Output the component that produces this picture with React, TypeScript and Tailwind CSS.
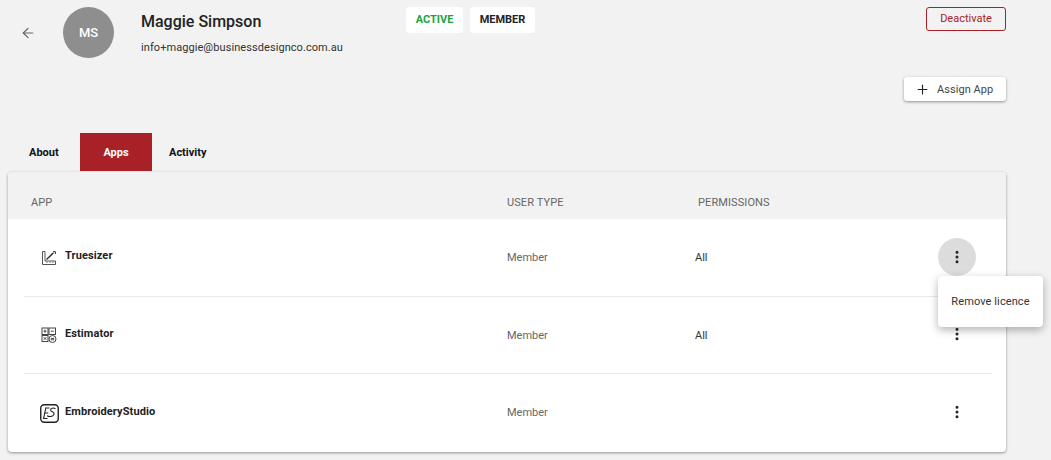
import { ArrowLeft, MoreVertical, Plus } from "lucide-react";
import { FC, ReactNode } from "react";

const TruesizerIcon = () => (
  <svg width="16" height="16" viewBox="0 0 16 16" fill="none" stroke="#555" strokeWidth="1">
    <path d="M1.5 1.5h2.5v9.5h10.5v3.5h-13z" />
    <path d="M5.5 9.5 12.5 2.8" strokeWidth="1.5" stroke="#333" />
    <path d="M12 1.6l2.4 0 0 2.4" stroke="#333" />
    <path d="M6 11.5v1.5M9 11.5v1.5M12 11.5v1.5" strokeWidth="0.8" />
  </svg>
);

const EstimatorIcon = () => (
  <svg width="16" height="16" viewBox="0 0 16 16" fill="none" stroke="#444" strokeWidth="1">
    <rect x="1" y="1" width="6" height="6.5" />
    <rect x="8" y="1" width="6.5" height="6.5" />
    <rect x="1" y="8.5" width="6" height="6" />
    <path d="M2.5 4.2h3M4 2.7v3M9.8 4.2h3M2.7 10.2l2.6 2.6M5.3 10.2l-2.6 2.6" />
    <circle cx="11.5" cy="12" r="3.5" fill="#fff" />
    <path d="M9.8 11.4h3.4M9.8 12.8h3.4" />
  </svg>
);

const StudioIcon = () => (
  <svg width="19" height="19" viewBox="0 0 19 19" fill="none" stroke="#222">
    <rect x="0.75" y="0.75" width="17.5" height="17.5" rx="3.5" strokeWidth="1.4" />
    <path d="M9.5 4H5.8L3.6 14.5H7.5M4.7 9H8.2" strokeWidth="1.1" />
    <path d="M15.5 4.8c-2-1.4-5-.6-4.9 1.2.1 2.1 3.9 1.7 3.5 4-.4 2.4-4.5 3.3-7 1.8" strokeWidth="1.1" />
  </svg>
);

type RowProps = {
  icon: ReactNode;
  name: string;
  permissions?: string;
  active?: boolean;
  last?: boolean;
  className?: string;
};

const Row: FC<RowProps> = ({ icon, name, permissions, active, last, className }) => (
  <div className={`flex items-center ${className}`}>
    <div className="flex w-[483px] items-center pl-[12px]">
      <div className="flex w-[26px] justify-center">{icon}</div>
      <span className="ml-[3px] -translate-y-[1px] text-[11px] font-bold tracking-[0.1px] text-[#222]">{name}</span>
    </div>
    <div className={last ? "w-[188px] text-[11px] text-[#666]" : "w-[188px] translate-y-[1px] text-[11px] text-[#666]"}>Member</div>
    <div className="w-[243px] translate-y-[1px] text-[11px] text-[#333]">{permissions}</div>
    <div className={active ? "flex size-[38px] -translate-y-[1px] items-center justify-center rounded-full bg-[#dcdcdc]" : "flex size-[38px] -translate-y-[1px] items-center justify-center"}>
      <MoreVertical size={16} strokeWidth={2.5} className="text-[#222]" />
    </div>
  </div>
);

export default function App() {
  return (
    <div className="relative h-[460px] w-[1051px] overflow-hidden bg-[#f2f2f2] font-['Roboto',sans-serif]">
      <div className="flex h-[133px] w-[1006px] items-start pt-[7px]">
        <div className="flex h-[51px] w-[63px] items-center pl-[20px]">
          <ArrowLeft size={16} strokeWidth={1.8} className="text-[#666]" />
        </div>
        <div className="flex size-[51px] items-center justify-center rounded-full bg-[#8e8e8e] text-[13px] font-medium text-white">MS</div>
        <div className="ml-[27px] w-[265px]">
          <div className="mt-[5px] text-[16px] leading-[19px] font-medium text-[#222]">Maggie Simpson</div>
          <div className="mt-[10px] text-[11px] leading-[13px] tracking-[0.07px] text-[#333]">info+maggie@businessdesignco.com.au</div>
        </div>
        <div className="flex gap-[7px]">
          <div className="flex h-[26px] w-[57px] items-center justify-center rounded-[3px] bg-white text-[11px] font-bold text-[#22a33f]">ACTIVE</div>
          <div className="flex h-[26px] w-[65px] items-center justify-center rounded-[3px] bg-white text-[11px] font-bold text-[#222]">MEMBER</div>
        </div>
        <div className="ml-auto flex flex-col items-end">
          <div className="flex h-[24px] w-[80px] items-center justify-center rounded-[3px] border border-[#a82126] text-[11px] text-[#a82126]">Deactivate</div>
          <div className="mt-[46px] flex h-[24px] w-[102px] items-center rounded-[3px] bg-white pl-[12px] text-[11px] tracking-[0.05px] text-[#444] shadow-[0_1px_3px_rgba(0,0,0,0.4)]">
            <Plus size={15} strokeWidth={1.8} className="-ml-[1px] text-[#222]" />
            <span className="ml-[7px] translate-y-[1px]">Assign App</span>
          </div>
        </div>
      </div>
      <div className="flex h-[39px] text-[11px] font-bold">
        <div className="flex h-[38px] w-[80px] items-center pt-[2px] pl-[29px] text-[#111]">About</div>
        <div className="flex h-[38px] w-[72px] items-center justify-center bg-[#a82126] pt-[2px] text-white">Apps</div>
        <div className="flex h-[38px] w-[80px] items-center pt-[2px] pl-[17px] text-[#111]">Activity</div>
      </div>
      <div className="ml-[8px] w-[998px] rounded-[4px] bg-white shadow-[0_1px_3px_rgba(0,0,0,0.4)]">
        <div className="flex h-[47px] items-center rounded-t-[4px] bg-[#f2f2f2] pt-[16px] pl-[23px] text-[11px] tracking-[0.1px] text-[#666]">
          <div className="w-[476px]">APP</div>
          <div className="w-[191px]">USER TYPE</div>
          <div>PERMISSIONS</div>
        </div>
        <div className="pr-[14px] pl-[16px]">
          <Row icon={<TruesizerIcon />} name="Truesizer" permissions="All" active className="h-[78px] border-b border-[#e9e9e9]" />
          <Row icon={<EstimatorIcon />} name="Estimator" permissions="All" className="h-[77px] border-b border-[#e9e9e9]" />
          <Row icon={<StudioIcon />} name="EmbroideryStudio" last className="h-[78px]" />
        </div>
      </div>
      <div className="absolute top-[276px] left-[938px] flex h-[51px] w-[105px] items-center justify-center rounded-[4px] bg-white pt-[2px] text-[11px] tracking-[0.1px] text-[#333] shadow-[0_3px_8px_rgba(0,0,0,0.3)]">Remove licence</div>
    </div>
  );
}
